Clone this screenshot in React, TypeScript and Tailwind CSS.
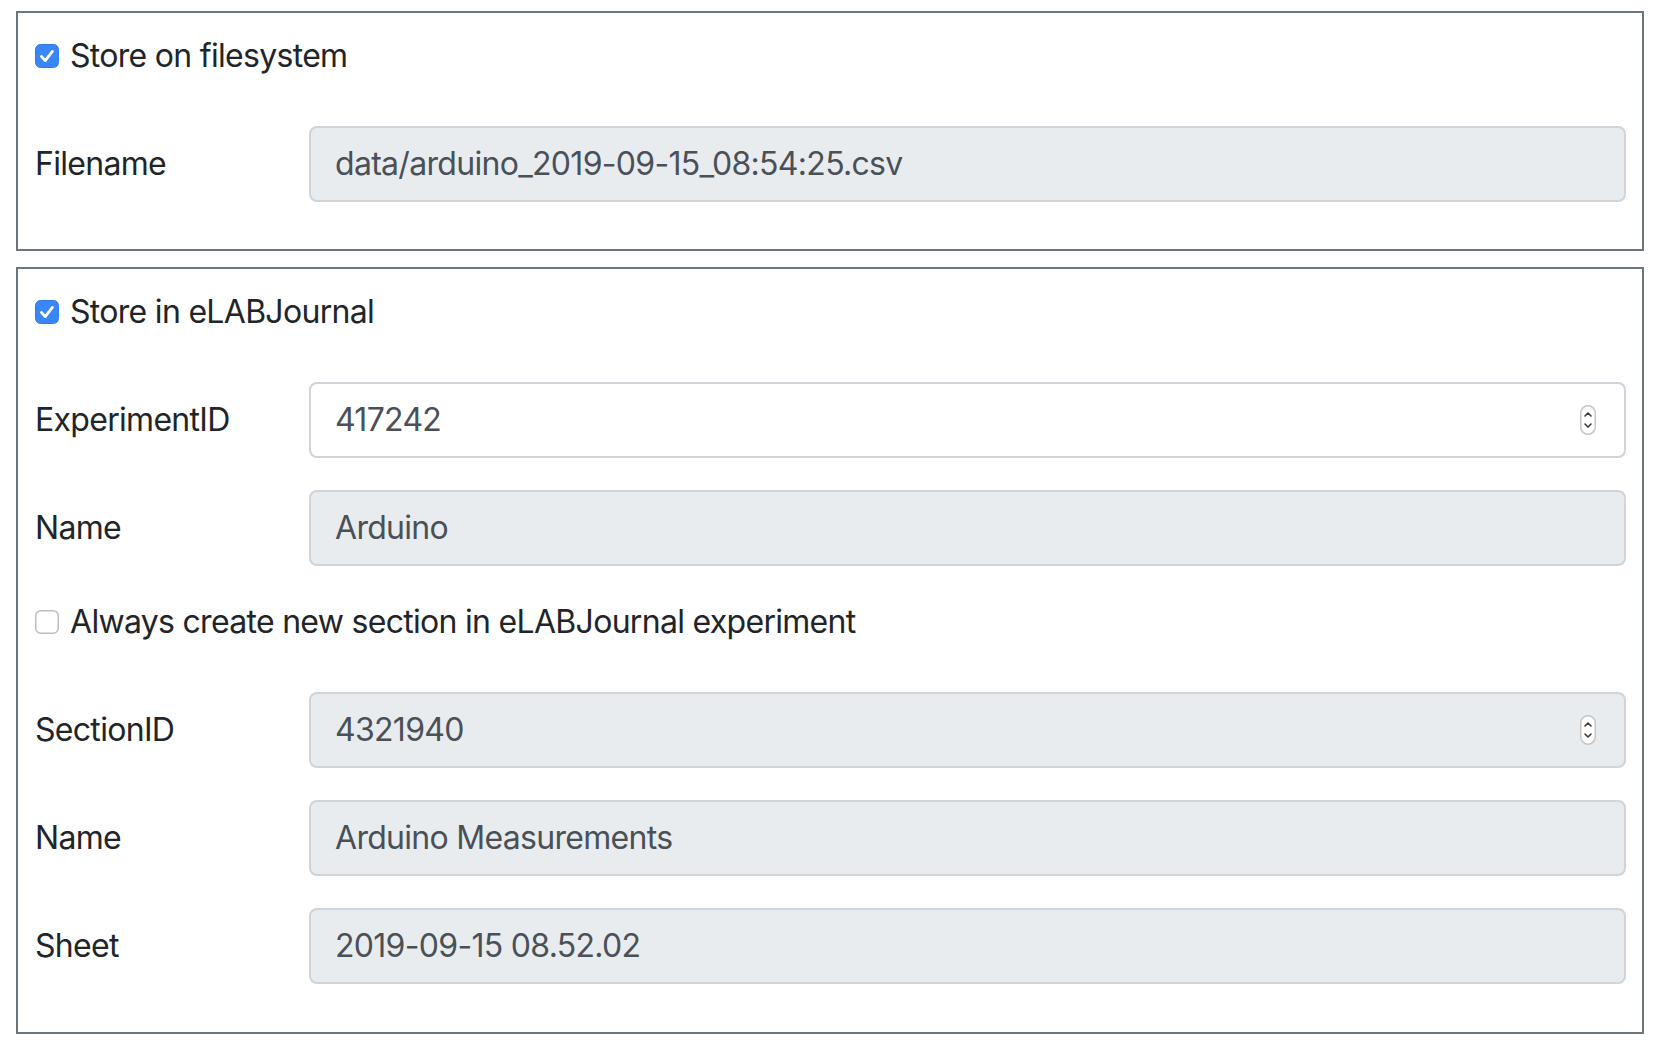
import React from 'react';

const FONT = { fontFamily: 'Inter, "Liberation Sans", sans-serif' };

const CheckBox = ({ checked }: { checked: boolean }) =>
  checked ? (
    <svg width="24" height="24" viewBox="0 0 24 24" className="shrink-0">
      <rect x="0.5" y="0.5" width="23" height="23" rx="5" fill="#3b86f6" stroke="#3479e8" />
      <path d="M6.5 12.5 L10.2 16.6 L17.4 7.4" fill="none" stroke="#fff" strokeWidth="2.8" strokeLinecap="round" strokeLinejoin="round" />
    </svg>
  ) : (
    <svg width="24" height="24" viewBox="0 0 24 24" className="shrink-0">
      <rect x="0.75" y="0.75" width="22.5" height="22.5" rx="5" fill="#fff" stroke="#bdbdbd" strokeWidth="1.5" />
    </svg>
  );

const Spinner = () => (
  <svg width="16" height="30" viewBox="0 0 16 30" className="shrink-0">
    <rect x="0.75" y="0.75" width="14.5" height="28.5" rx="7.25" fill="#fff" stroke="#c6c6c6" strokeWidth="1.5" />
    <path d="M5 11 L8 8 L11 11" fill="none" stroke="#3a3a3a" strokeWidth="1.6" strokeLinecap="round" strokeLinejoin="round" />
    <path d="M5 19 L8 22 L11 19" fill="none" stroke="#3a3a3a" strokeWidth="1.6" strokeLinecap="round" strokeLinejoin="round" />
  </svg>
);

// checkbox + label line
const CheckRow = ({ checked, label }: { checked: boolean; label: string }) => (
  <div className="flex items-center h-12 gap-[11px] pl-[1px]">
    <CheckBox checked={checked} />
    <span className="text-[32px] leading-[48px] tracking-[-0.7px] text-[#212529]">{label}</span>
  </div>
);

const Field = ({ label, value, readOnly = true, number = false }: { label: string; value: string; readOnly?: boolean; number?: boolean }) => (
  <div className="flex items-center">
    <div className="w-[275px] shrink-0 pl-[1px] text-[32px] leading-[48px] tracking-[-0.7px] text-[#212529]">{label}</div>
    <div
      className={`flex-1 h-[76px] flex items-center justify-between rounded-[8px] border-2 border-[#ced4da] pl-[24px] pr-[28px] ${
        readOnly ? 'bg-[#e9ecef]' : 'bg-white'
      }`}
    >
      <span className="text-[32px] leading-[48px] tracking-[-0.7px] text-[#495057]">{value}</span>
      {number && <Spinner />}
    </div>
  </div>
);

export default function App() {
  return (
    <div className="bg-white w-[1656px] h-[1048px] pt-[11px] pl-4" style={FONT}>
      <div className="w-[1628px] border-2 border-[#6c757d] pt-[19px] pb-[47px] px-4">
        <CheckRow checked label="Store on filesystem" />
        <div className="mt-[46px]">
          <Field label="Filename" value="data/arduino_2019-09-15_08:54:25.csv" />
        </div>
      </div>
      <div className="w-[1628px] mt-4 border-2 border-[#6c757d] pt-[19px] pb-[48px] px-4">
        <CheckRow checked label="Store in eLABJournal" />
        <div className="mt-[46px] flex flex-col gap-8">
          <Field label="ExperimentID" value="417242" readOnly={false} number />
          <Field label="Name" value="Arduino" />
          <CheckRow checked={false} label="Always create new section in eLABJournal experiment" />
        </div>
        <div className="mt-[46px] flex flex-col gap-8">
          <Field label="SectionID" value="4321940" number />
          <Field label="Name" value="Arduino Measurements" />
          <Field label="Sheet" value="2019-09-15 08.52.02" />
        </div>
      </div>
    </div>
  );
}
